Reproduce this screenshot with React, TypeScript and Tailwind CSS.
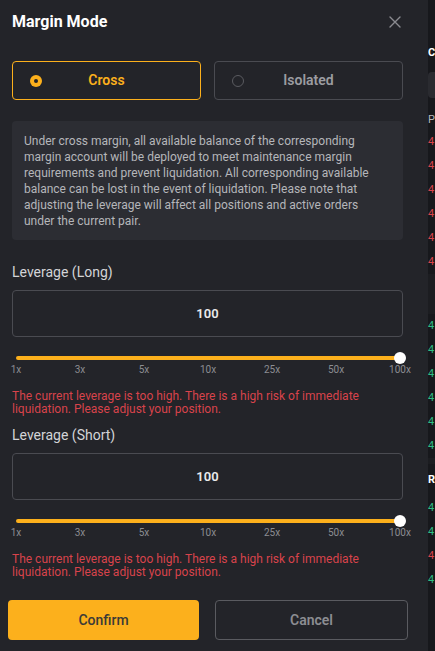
import React from 'react';

const ticks = ['1x', '3x', '5x', '10x', '25x', '50x', '100x'];

const LeverageBlock = ({ label }: { label: string }) => (
  <div>
    <div className="text-[14px] leading-[20px] text-[#d3d4d7]">{label}</div>
    <div className="mt-[8px] flex h-[47px] items-center justify-center rounded-[4px] border border-[#4a4b51] text-[13px] font-semibold text-[#eaeaec]">
      100
    </div>
    {/* slider */}
    <div className="-ml-3 mt-[19px] w-[416px]">
      <div className="relative mx-4 h-[4px] rounded-full bg-[#fcb01c]">
        <div className="absolute -right-[6px] -top-[4px] h-[12px] w-[12px] rounded-full bg-white" />
      </div>
      <div className="mt-[4px] flex justify-between">
        {ticks.map(t => (
          <span key={t} className="w-[32px] text-center text-[10px] leading-[12px] text-[#8c8d92]">
            {t}
          </span>
        ))}
      </div>
    </div>
    <p className="mt-[14px] text-[12px] leading-[12.5px] text-[#d8434b]">
      The current leverage is too high. There is a high risk of immediate liquidation. Please adjust your position.
    </p>
  </div>
);

const redRows = ['4', '4', '4', '4', '4', '4'];
const greenRows = ['4', '4', '4', '4', '4', '4'];

export default function App() {
  return (
    <div className="flex h-[651px] w-[435px] overflow-hidden bg-[#17181c] font-['Roboto',sans-serif]">
      {/* modal */}
      <div className="flex h-full w-[428px] shrink-0 flex-col bg-[#232429]">
        <div className="flex h-[44px] items-center justify-between pl-3 pr-[27px]">
          <h2 className="text-[16px] font-bold text-white">Margin Mode</h2>
          <svg width="12" height="12" viewBox="0 0 12 12" className="text-[#8a8b90]">
            <path d="M1 1L11 11M11 1L1 11" stroke="currentColor" strokeWidth="1.4" strokeLinecap="round" />
          </svg>
        </div>

        <div className="flex flex-col pl-3 pr-[25px]">
          <div className="mt-[17px] flex gap-[13px]">
            <button className="flex h-[39px] w-[189px] items-center rounded-[4px] border border-[#fcb01c] px-[17px]">
              <span className="flex h-[12px] w-[12px] items-center justify-center rounded-full bg-[#fcb01c]">
                <span className="h-[4px] w-[4px] rounded-full bg-[#232429]" />
              </span>
              <span className="flex-1 text-center text-[14px] font-semibold text-[#fcb01c]">Cross</span>
              <span className="w-[12px]" />
            </button>
            <button className="flex h-[39px] w-[189px] items-center rounded-[4px] border border-[#4a4b51] px-[17px]">
              <span className="h-[12px] w-[12px] rounded-full border border-[#5a5b60]" />
              <span className="flex-1 text-center text-[14px] font-semibold text-[#9b9ca1]">Isolated</span>
              <span className="w-[12px]" />
            </button>
          </div>

          <div className="mt-[21px] h-[119px] rounded-[4px] bg-[#2c2d33] px-3 pt-[12px] text-[12px] leading-[16px] text-[#b5b6ba]">
            Under cross margin, all available balance of the corresponding margin account will be deployed to meet maintenance margin requirements and prevent liquidation. All corresponding available balance can be lost in the event of liquidation. Please note that adjusting the leverage will affect all positions and active orders under the current pair.
          </div>

          <div className="mt-[22px]">
            <LeverageBlock label="Leverage (Long)" />
          </div>
          <div className="mt-[10px]">
            <LeverageBlock label="Leverage (Short)" />
          </div>
        </div>

        <div className="mt-[22px] flex gap-4 pl-2 pr-5">
          <button className="h-[40px] w-[191px] rounded-[4px] bg-[#fcb01c] text-[14px] font-medium text-[#3b3a37]">
            Confirm
          </button>
          <button className="h-[40px] w-[193px] rounded-[4px] border border-[#5a5b60] text-[14px] font-semibold text-[#8c8d92]">
            Cancel
          </button>
        </div>
      </div>

      {/* background page strip */}
      <div className="flex h-full w-[7px] flex-col overflow-hidden bg-[#17181c] pt-[45px] text-[11px] leading-[16px]">
        <span className="font-bold text-white">C</span>
        <div className="mt-[11px] h-[26px] w-[14px] rounded-[4px] bg-[#2a2b30]" />
        <span className="mt-[14px] text-[#b5b6ba]">P</span>
        <div className="mt-[2px] flex flex-col">
          {redRows.map((c, i) => (
            <span key={i} className="h-[24px] leading-[24px] text-[#d8434b]">{c}</span>
          ))}
        </div>
        <div className="h-[40px] bg-[#1c1d21]" />
        <div className="flex flex-col">
          {greenRows.map((c, i) => (
            <span key={i} className="h-[24px] leading-[24px] text-[#2ebd85]">{c}</span>
          ))}
        </div>
        <div className="h-[6px] bg-[#1c1d21]" />
        <span className="mt-[4px] h-[24px] font-bold leading-[24px] text-white">R</span>
        <div className="mt-[4px] flex flex-col">
          <span className="h-[24px] leading-[24px] text-[#2ebd85]">4</span>
          <span className="h-[24px] leading-[24px] text-[#2ebd85]">4</span>
          <span className="h-[24px] leading-[24px] text-[#d8434b]">4</span>
          <span className="h-[24px] leading-[24px] text-[#2ebd85]">4</span>
        </div>
      </div>
    </div>
  );
}
